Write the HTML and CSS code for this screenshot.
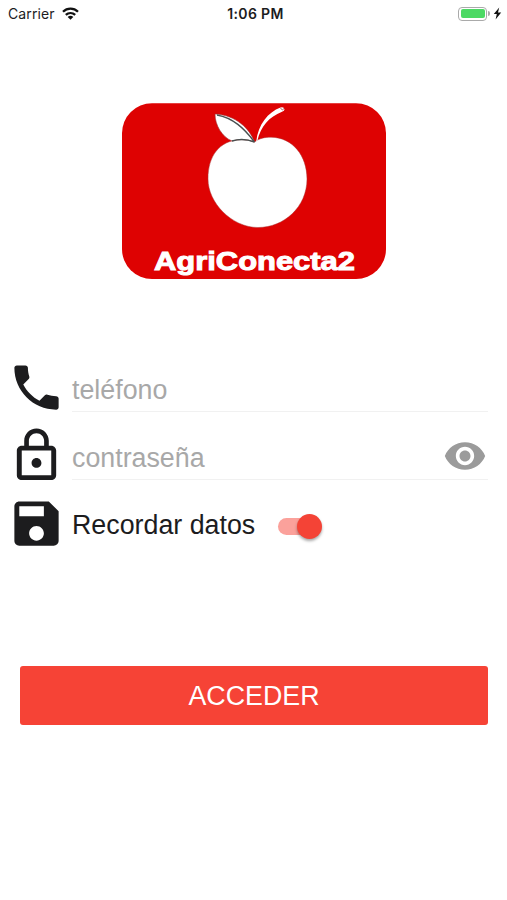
FILE: index.html
```html
<!DOCTYPE html>
<html lang="es">
<head>
<meta charset="utf-8">
<title>AgriConecta2</title>
<link rel="stylesheet" href="styles.css">
</head>
<body>
<header class="status">
  <div class="status-left">
    <span class="carrier">Carrier</span>
    <svg class="wifi" viewBox="0 0 17 13">
      <g fill="none" stroke="#111" stroke-width="2.3">
        <path d="M1 4.7C5.2.6 11.8.6 16 4.7"/>
        <path d="M3.8 7.9c2.7-2.5 6.7-2.5 9.4 0"/>
      </g>
      <path fill="#111" d="M5.7 9.9c1.6-1.4 4-1.4 5.6 0L8.5 12.7z"/>
    </svg>
  </div>
  <span class="clock">1:06 PM</span>
  <div class="status-right">
    <span class="battery"><span class="charge"></span></span>
    <span class="tip"></span>
    <svg class="bolt" viewBox="0 0 9 13"><path fill="#111" d="M6.2.5.8 7h3L2.6 12.5 8.200 5.600H5z"/></svg>
  </div>
</header>
<main>
  <svg class="logo" viewBox="0 0 264 176">
    <rect y=".3" width="264" height="175.700" rx="30" fill="#de0202"/>
    <path fill="#fff" stroke="#a33" stroke-width=".5" d="M132.500 39C138 35 143 34.200 149 34.200C171 34.500 185 53 185 76C185 104 162 124.500 136 124.500C110 124.500 86 100 86 76C86 53 97 38 118 36.500Q127 36 132.500 39z"/>
    <path fill="#fff" stroke="#933" stroke-width=".6" d="M132.500 39C128 26 114 12 93 11C93 22 100 34 110 38Q121 34.500 132.500 39z"/>
    <path fill="none" stroke="#485050" stroke-width="1.400" d="M95 12C111 15 122 25 132.500 39M110 38Q121 34.500 132.500 39"/>
    <path fill="#fff" d="M134.300 38C136 22 146 9 158.500 4.500Q162 3.500 162.500 6.500Q162.500 8 160 8.800C147 14 139 23 135.300 38z"/>
    <path fill="none" stroke="#9a3434" stroke-width=".8" d="M158.500 5.500Q161 8 162 5.500"/>
    <text class="brand" x="32" y="167" textLength="201" lengthAdjust="spacingAndGlyphs">AgriConecta2</text>
  </svg>
  <form class="login">
    <div class="row">
      <svg class="icon" viewBox="0 0 24 24"><path d="M6.620 10.790c1.440 2.830 3.760 5.140 6.590 6.590l2.200-2.200c.27-.27.67-.36 1.020-.24 1.120.37 2.330.57 3.570.57.55 0 1 .45 1 1V20c0 .55-.45 1-1 1-9.390 0-17-7.610-17-17 0-.55.45-1 1-1h3.500c.55 0 1 .45 1 1 0 1.250.2 2.450.57 3.570.11.35.03.74-.25 1.020l-2.200 2.200z"/></svg>
      <div class="field"><span>teléfono</span></div>
    </div>
    <div class="row">
      <svg class="icon" viewBox="0 0 24 24"><path d="M12 17c1.100 0 2-.9 2-2s-.9-2-2-2-2 .9-2 2 .9 2 2 2zm6-9h-1V6c0-2.760-2.240-5-5-5S7 3.240 7 6v2H6c-1.100 0-2 .9-2 2v10c0 1.100.9 2 2 2h12c1.100 0 2-.9 2-2V10c0-1.100-.9-2-2-2zM8.900 6c0-1.710 1.390-3.100 3.100-3.100s3.100 1.390 3.100 3.100v2H8.900V6zM18 20H6V10h12v10z"/></svg>
      <div class="field secret"><span>contraseña</span>
        <svg class="eye" viewBox="0 0 24 24"><path d="M12 4.500C7 4.500 2.730 7.610 1 12c1.730 4.390 6 7.500 11 7.500s9.270-3.110 11-7.500c-1.730-4.390-6-7.500-11-7.500zM12 17c-2.760 0-5-2.240-5-5s2.240-5 5-5 5 2.240 5 5-2.240 5-5 5zm0-8c-1.660 0-3 1.340-3 3s1.340 3 3 3 3-1.340 3-3-1.340-3-3-3z"/></svg>
      </div>
    </div>
    <div class="row">
      <svg class="icon" viewBox="0 0 24 24"><path d="M17 3H5c-1.110 0-2 .9-2 2v14c0 1.100.89 2 2 2h14c1.100 0 2-.9 2-2V7l-4-4zm-5 16c-1.660 0-3-1.340-3-3s1.340-3 3-3 3 1.340 3 3-1.340 3-3 3zm3-10H5V5h10v4z"/></svg>
      <span class="remember">Recordar datos</span>
      <span class="switch"><span class="thumb"></span></span>
    </div>
    <button class="submit" type="button">ACCEDER</button>
  </form>
</main>
</body>
</html>
```
FILE: styles.css
```css
* { box-sizing: border-box; }
body {
  margin: 0;
  height: 900px;
  overflow: hidden;
  background: #fff;
  color: #1c1c1e;
  font-family: "Liberation Sans", Arial, sans-serif;
}
svg { display: block; flex: none; }
.status {
  display: grid;
  grid-template-columns: 1fr auto 1fr;
  align-items: center;
  height: 27px;
  padding: 0 5px 0 8px;
  font-family: Inter, "Liberation Sans", sans-serif;
  font-size: 14px;
}
.status-left, .status-right { display: flex; align-items: center; }
.status-right { justify-content: flex-end; }
.carrier { letter-spacing: 0.1px; }
.wifi { width: 17px; height: 13px; margin-left: 7px; }
.clock { margin-left: 1px; font-weight: 600; font-size: 14px; letter-spacing: 0.350px; }
.battery {
  width: 29px;
  height: 14px;
  padding: 1.500px;
  border: 1px solid #aaa;
  border-radius: 4px;
}
.charge { display: block; height: 100%; border-radius: 2px; background: #4cd964; }
.tip { width: 2px; height: 5px; margin-left: 1px; border-radius: 0 2px 2px 0; background: #aaa; }
.bolt { width: 9px; height: 13px; margin-left: 3px; }
.logo { width: 264px; height: 176px; margin: 76px 0 0 122px; }
.brand {
  font: 700 26.500px "Liberation Sans", Arial, sans-serif;
  fill: #fff;
  stroke: #fff;
  stroke-width: 1px;
}
.login { display: flex; flex-direction: column; margin-top: 78.500px; padding: 0 19px 0 7px; }
.row { display: flex; align-items: flex-start; height: 68.400px; font-size: 26.800px; }
.icon { width: 59px; height: 59px; fill: #1c1c1e; }
.field {
  display: flex;
  flex: 1;
  align-items: center;
  height: 54px;
  margin-left: 6px;
  padding-top: 12px;
  border-bottom: 1px solid #f1f1f1;
  color: #a8a8a8;
}
.secret { padding-top: 13px; }
.eye { width: 44px; height: 44px; margin: -8px 1px -3px auto; fill: #9b9b9b; }
.remember { margin-left: 6px; line-height: 62px; }
.switch { position: relative; width: 42px; height: 17px; margin: 24px 0 0 23px; border-radius: 9px; background: #fba19b; }
.thumb {
  position: absolute;
  top: -4px;
  right: -2px;
  width: 25px;
  height: 25px;
  border-radius: 50%;
  background: #f44336;
  box-shadow: 0 2px 3px rgba(0, 0, 0, 0.350);
}
.submit {
  height: 58.500px;
  margin: 103.700px 0 0 13px;
  padding: 1px 0 0;
  border: 0;
  border-radius: 3px;
  background: #f64336;
  color: #fff;
  font: 26.800px "Liberation Sans", Arial, sans-serif;
}
```
